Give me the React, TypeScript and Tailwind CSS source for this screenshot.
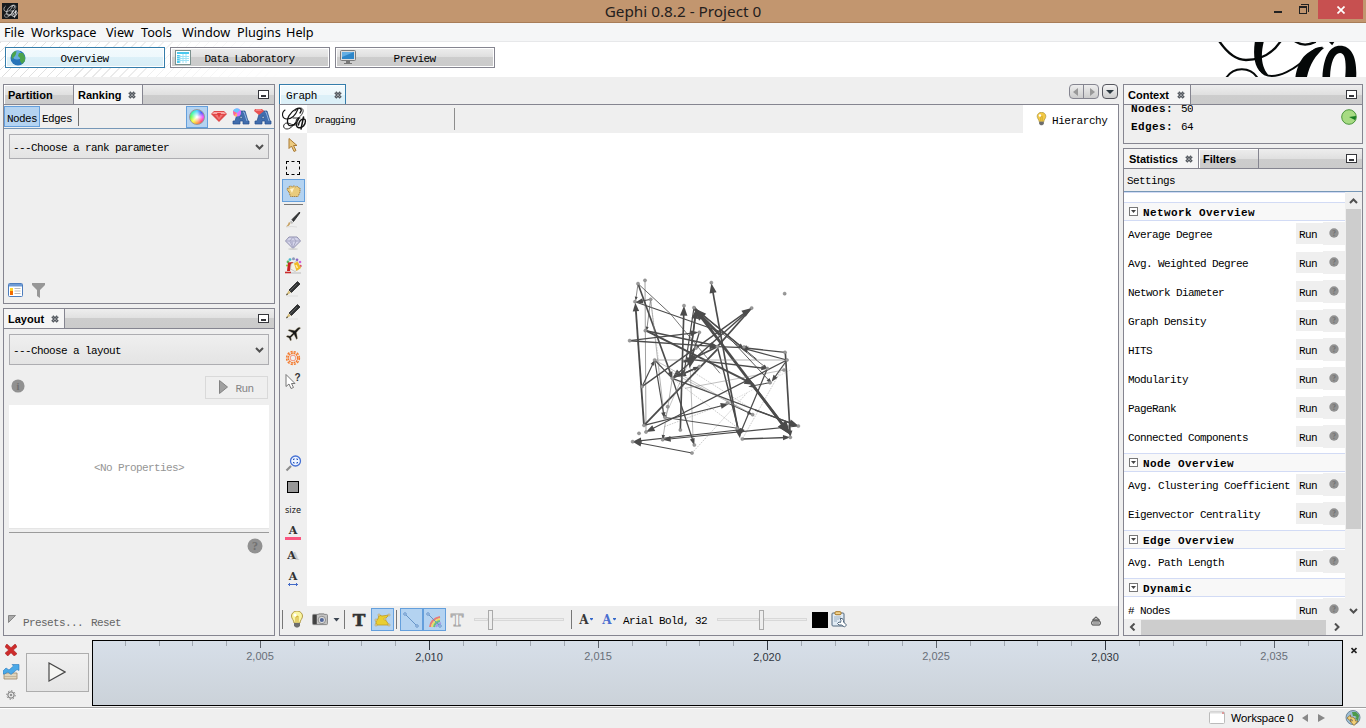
import React from 'react';

const mono = "font-['Liberation_Mono','Noto_Sans_CJK_SC',monospace] text-[11px] tracking-[-0.6px] leading-[12px] whitespace-pre text-black";
const monoBold = "font-['Liberation_Mono','Noto_Sans_CJK_SC',monospace] text-[11px] font-bold tracking-[0.4px] leading-[12px] whitespace-pre text-black";
const tabText = "font-['Liberation_Sans',Arial,sans-serif] text-[11px] font-bold leading-[14px] whitespace-pre text-black";
const ui = "font-['Noto_Sans','Open_Sans',sans-serif] whitespace-pre";
const stripBg = 'bg-[linear-gradient(to_bottom,#eeeeee,#e0e0e0_50%,#cdcdcd_50%,#cbcbcb)]';

function Close() {
  return (
    <svg width="8" height="8" viewBox="0 0 8 8" className="shrink-0">
      <path d="M1.300 1.300l5.400 5.400M6.700 1.300L1.300 6.700" stroke="#555a60" strokeWidth="3" />
      <path d="M1.500 1.500l5 5M6.500 1.500l-5 5" stroke="#d4d6d8" strokeWidth=".8" strokeDasharray="1 .8" />
    </svg>
  );
}

function Minimise() {
  return (
    <div className="mr-[5px] ml-auto flex h-[9px] w-[11px] items-end justify-center self-center border border-[#35363b] bg-white pb-px">
      <div className="h-[2px] w-[5px] bg-[#35363b]" />
    </div>
  );
}

function ScriptLogo({ size, color }: { size: number; color: string }) {
  return (
    <svg width={size} height={size} viewBox="0 0 26 26" fill="none" stroke={color} strokeLinecap="round">
      <path d="M4 4c-4 3-3 9 2 9 5 0 9-5 11-10" strokeWidth="1.1" />
      <path d="M19 7c3-4 0-6-4-4C9 6 5 13 7 18c2 4 8 1 11-6" strokeWidth="1.3" />
      <path d="M12 12h7M17 12c-3 6-7 11-11 11-5 0-4-6 0-6 3 0 6 3 9 2" strokeWidth=".9" />
      <path d="M22.500 11l-2.500 12" strokeWidth="1.5" />
      <path d="M16 17c-2 5 3 6 6.500 3 3-4 2-7 .5-7-3 0-5 3-5.500 6" strokeWidth="1.4" />
      <path d="M14 5c5-5 9-3 8 1-1 3-4 6-7 8" strokeWidth=".8" />
    </svg>
  );
}

function BigLogo() {
  return (
    <svg width="148" height="35" viewBox="654 126 444 105" className="ml-auto" fill="none" stroke="#050808">
      <path d="M658 124C684 162 708 180 738 180c48 0 82-22 105-58" strokeWidth="7" />
      <path d="M778 122c-9 42-9 88 16 101 33 17 96-14 137-63 10-12 22-18 37-17" strokeWidth="6" />
      <path d="M765 122h27c-10 40-10 75 13 103-40-3-48-51-40-103z" fill="#050808" stroke="none" />
      <path d="M676 238c22-40 76-40 98-2" strokeWidth="6" />
      <path d="M885 124q28 19 62 1M990 124l6 6 4-6" strokeWidth="7" />
      <path d="M885 240c6-49 27-96 88-97-28 24-46 53-54 97z" fill="#050808" stroke="none" />
      <path fillRule="evenodd" d="M967 240c2-70 22-103 53-103 38 0 53 42 48 103zm23 0h45c5-55 1-81-15-81-18 0-30 32-30 81z" fill="#050808" stroke="none" />
    </svg>
  );
}

function Globe() {
  return (
    <svg width="16" height="16" viewBox="0 0 16 16">
      <circle cx="8" cy="8" r="7.5" fill="#2774b9" />
      <circle cx="7" cy="5" r="4.6" fill="#66acdd" />
      <path d="M1.5 5q2-4 5-4L6 4 5 6 3 8 2 10zM9 3l4 0 2 4 0 4-3 3-2-3 0-3-2-2z" fill="#4ba34c" />
    </svg>
  );
}

function Perspective({ label, active, icon }: { label: string; active?: boolean; icon: React.ReactNode }) {
  return (
    <div className={`mr-[5px] flex h-[21px] w-[160px] items-center border p-px ${active ? 'border-[#347dab] bg-[linear-gradient(to_bottom,#f2fafd,#eef8fc_50%,#dcf0f8_50%,#d8edf5)]' : 'border-[#858590] bg-[linear-gradient(to_bottom,#eeeeee,#dedede_50%,#cdcdcd_50%,#cbcbcb)]'} shadow-[inset_0_0_0_1px_#ffffff]`}>
      <div className="ml-[3px] flex w-4 shrink-0 items-center justify-center">{icon}</div>
      <div className={`flex-1 pt-[2px] pr-[20px] text-center ${mono}`}>{label}</div>
    </div>
  );
}

function ColorWheel() {
  return <div className="size-4 rounded-full border border-[#999] bg-[radial-gradient(circle,white_5%,transparent_65%),conic-gradient(#4ad4ff,#4b57ff,#f64dff,#ff466d,#ff9c37,#f8ff3f,#5fff4b,#35f5b9,#4ad4ff)]" />;
}

function Ruby() {
  return (
    <svg width="16" height="11" viewBox="0 0 16 11">
      <path d="M3 0h10l3 3-8 8-8-8z" fill="#df4a4a" />
      <path d="M3 1h10l2 2H1z" fill="#f9a5a5" />
      <path d="M4 4h8l-4 5z" fill="#f07575" />
      <path d="M6 2h4l-2 5z" fill="#e23a3a" />
    </svg>
  );
}

function BlueA({ ruby }: { ruby?: boolean }) {
  return (
    <svg width="18" height="18" viewBox="0 0 18 18">
      <path fillRule="evenodd" d="M6 3h7l3 10h1v3h-6v-3H8v3H1v-3h2zM9 7l-1.2 3.5h2.6z" fill="#416eae" stroke="#244f8c" strokeWidth=".7" />
      <path d="M11 4h1l3 9" fill="none" stroke="#8cb1df" />
      {ruby ? <path d="M1 1h7l2 2-5 4-5-4z" fill="#e95252" /> : <g><circle cx="5" cy="4.5" r="4" fill="#df75ff" /><path d="M5 5L1 3A4 4 0 0 1 8 2z" fill="#69c8ff" /><path d="M5 5L1 3l1 5z" fill="#ff6988" /><path d="M5 5l-3 3 3 .5z" fill="#ffba5c" /></g>}
      {ruby && <path d="M2 1.5h5l1 1H1.500z" fill="#fab0b0" />}
    </svg>
  );
}

function Chevron({ dir = 'down' }: { dir?: 'down' | 'up' | 'left' | 'right' }) {
  const paths = { down: 'M1 2l3.500 3.500L8 2', up: 'M1 6l3.500-3.500L8 6', left: 'M6.500 .5L3 4l3.500 3.500', right: 'M3 .5L6.500 4 3 7.500' };
  return <svg width="9" height="8" viewBox="0 0 9 8" className="shrink-0"><path d={paths[dir]} fill="none" stroke="#505050" strokeWidth="2" /></svg>;
}

function Select({ label, tall }: { label: string; tall?: boolean }) {
  return (
    <div className={`mx-[5px] flex items-center justify-between border border-[#adadb1] bg-[linear-gradient(#efefef,#e4e4e4)] pr-[4px] pl-[3px] ${tall ? 'h-[31px]' : 'h-[25px]'}`}>
      <span className={`pt-[2px] ${mono}`}>{label}</span>
      <Chevron />
    </div>
  );
}

function Help({ size, label = '?' }: { size: number; label?: string }) {
  return (
    <svg width={size} height={size} viewBox="0 0 16 16">
      <circle cx="8" cy="8" r="7.500" fill="#919191" />
      <text x="8" y="12.2" textAnchor="middle" fontFamily="Liberation Serif, serif" fontWeight="bold" fontSize="12" fill="#707070">{label}</text>
    </svg>
  );
}

function RankingPanel() {
  return (
    <div className="flex h-[220px] flex-col border border-[#858590]">
      <div className={`flex h-[20px] border-b border-[#858590] ${stripBg}`}>
        <div className="flex w-[70px] items-center border-r border-[#858590] pl-1 shadow-[inset_1px_1px_0_#fff]"><span className={tabText}>Partition</span></div>
        <div className="flex w-[69px] items-center border-r border-[#858590] bg-[#f5f5f5] pl-1"><span className={tabText}>Ranking</span><div className="ml-[7px]"><Close /></div></div>
        <Minimise />
      </div>
      <div className="flex h-[24px] items-center border-b border-[#7697b7]">
        <div className="flex h-[21px] w-[36px] items-center justify-center border border-[#649fdc] bg-[#b4d3f1] pt-[4px]"><span className={mono}>Nodes</span></div>
        <span className={`ml-[2px] pt-[4px] ${mono}`}>Edges</span>
        <div className="ml-[6px] h-[18px] w-px bg-[#707070]" />
        <div className="ml-auto flex h-[22px] w-[22px] items-center justify-center border border-[#649fdc] bg-[#b4d3f1]"><ColorWheel /></div>
        <div className="flex w-[22px] justify-center"><Ruby /></div>
        <div className="flex w-[22px] justify-center"><BlueA /></div>
        <div className="flex w-[22px] justify-center"><BlueA ruby /></div>
      </div>
      <div className="h-[5px]" />
      <Select label="---Choose a rank parameter" />
      <div className="mt-auto flex h-[26px] items-center pl-1">
        <svg width="15" height="14" viewBox="0 0 15 14"><rect x=".5" y=".5" width="14" height="13" rx="1" fill="#fff" stroke="#4d7dbd" /><path d="M1 1h13v2.500H1z" fill="#6e9bd5" /><path d="M2 5h3v7H2z" fill="#f26b00" /><path d="M2 5h3v3H2z" fill="#ffd32c" /><path d="M6.500 5.500h6M6.500 8h6M6.500 10.500h6" stroke="#bbb" /></svg>
        <svg className="ml-[9px]" width="13" height="15" viewBox="0 0 13 15"><path d="M0 0h13v2L8 7v8L5 13V7L0 2z" fill="#979797" /></svg>
      </div>
    </div>
  );
}

function LayoutPanel() {
  return (
    <div className="mt-[4px] flex h-[328px] flex-col border border-[#858590]">
      <div className={`flex h-[20px] border-b border-[#858590] ${stripBg}`}>
        <div className="flex w-[61px] items-center border-r border-[#858590] bg-[#f5f5f5] pl-1"><span className={tabText}>Layout</span><div className="ml-[7px]"><Close /></div></div>
        <Minimise />
      </div>
      <div className="h-[5px]" />
      <Select label="---Choose a layout" tall />
      <div className="mt-[9px] flex h-[26px] items-center pr-[6px] pl-[7px]">
        <div className="mb-[3px]"><Help size={14} label="i" /></div>
        <div className="ml-auto flex h-[23px] w-[63px] items-center justify-center gap-[7px] border border-[#d9d9d9]">
          <svg width="9" height="14" viewBox="0 0 9 14"><path d="M.5.5v13L8.500 7z" fill="#a0a0a0" stroke="#828282" /></svg>
          <span className={`pt-[3px] ${mono}`}><span className="text-[#858585]">Run</span></span>
        </div>
      </div>
      <div className="mx-[5px] mt-[5px] flex h-[124px] items-center justify-center border-b border-[#e5e5e5] bg-white"><span className={`pt-[2px] ${mono}`}><span className="text-[#959595]">&lt;No Properties&gt;</span></span></div>
      <div className="mx-[5px] mt-[3px] h-px bg-[#9b9b9b]" />
      <div className="mt-[5px] mr-[11px] self-end"><Help size={16} /></div>
      <div className="mt-auto mb-[4px] flex items-center pl-1">
        <svg width="9" height="8" viewBox="0 0 9 8" className="mb-2"><path d="M.5.5h7L.5 7.500z" fill="#aaa" stroke="#888" /></svg>
        <span className={`ml-[6px] ${mono}`}><span className="text-[#656565]">Presets...</span></span><span className={`ml-[8px] ${mono}`}><span className="text-[#656565]">Reset</span></span>
      </div>
    </div>
  );
}

function Bulb({ small }: { small?: boolean }) {
  return (
    <svg width={small ? 11 : 14} height={small ? 14 : 17} viewBox="0 0 14 17">
      <path d="M4 12C4 9 1.500 8 1.500 5a5.500 5 0 0 1 11 0c0 3-2.500 4-2.500 7z" fill={small ? '#f4ca45' : '#faf6a2'} stroke="#b39b47" />
      <path d="M6 11V6l2-1v6" stroke="#d0a92e" fill="none" />
      <path d="M4 12h6v3L8 16.500H6L4 15z" fill="#6d6d6d" />
      <circle cx="5" cy="4" r="1.500" fill="#fff" />
    </svg>
  );
}

function Brush() {
  return <svg width="16" height="17" viewBox="0 0 16 17"><path d="M1 16q6-1 11 0" stroke="#ddd" fill="none" /><path d="M14.500 1L7 8.500l1.500 2L14.800 2z" fill="#35383b" stroke="#202020" strokeWidth=".8" /><path d="M5.500 10.200l2 2" stroke="#bbb" strokeWidth="2" /><path d="M5.500 12q-1 3.500-4.500 3.500 2-1.500 3-4.500z" fill="#c7a264" /></svg>;
}
function Diamond() {
  return <svg width="16" height="14" viewBox="0 0 16 14"><path d="M4 1h8l3.500 4L8 12.500.5 5z" fill="#d4d4ea" stroke="#8f8fae" /><path d="M1 5h14M5 5l3 7 3-7-3-4z" fill="none" stroke="#a7a7c3" /><path d="M5 5h3v6z" fill="#b8b8d4" /><ellipse cx="8" cy="13" rx="5" ry=".7" fill="#ccc" /></svg>;
}
function Palette() {
  return (
    <svg width="17" height="17" viewBox="0 0 17 17">
      <circle cx="3" cy="5" r="1.400" fill="#59b95f" /><circle cx="5" cy="2.600" r="1.400" fill="#48b7ca" /><circle cx="8.500" cy="1.700" r="1.500" fill="#8b98b8" /><circle cx="12" cy="2.800" r="1.400" fill="#8868c5" /><circle cx="15" cy="5" r="1.300" fill="#cb63db" /><circle cx="15.500" cy="9" r="1.200" fill="#df4c61" /><circle cx="2" cy="8.500" r="1.100" fill="#96d63d" />
      <path d="M3 5.500l5.500-.5L6 8l-1 6H2z" fill="#c92222" />
      <path d="M6 7l6-3 3.500 6.500L10 14.500 5.500 12z" fill="#f4f1e4" stroke="#b5b5b5" strokeWidth=".7" /><path d="M9 6.500l3.500-2L16 11l-4.500 3z" fill="#f1b926" /><path d="M11 8l1.500 3" stroke="#fff0a8" strokeWidth="1.500" />
      <path d="M0 15.500h6" stroke="#c82a2a" strokeWidth="1.600" /><path d="M6 16h10" stroke="#bbb" />
    </svg>
  );
}
function Pencil() {
  return <svg width="16" height="17" viewBox="0 0 16 17"><path d="M2 16h11" stroke="#ddd" /><path d="M12.500 1.500L15 4 6.500 12.500 4 10z" fill="#303234" stroke="#222" strokeWidth=".8" /><path d="M12 4L5 11" stroke="#666" strokeWidth=".8" /><path d="M3.500 10.500l2.300 2.300L1 15.500z" fill="#d7be78" /><path d="M1 15.500l1-2.200 1 1z" fill="#222" /></svg>;
}
function Plane() {
  return <svg width="17" height="17" viewBox="0 0 17 17"><path d="M15.500 2q-1-1.500-3 0L10 4.500 4 3.500 3 4.500l5 2.500-3 3-2.500-.5L1 10.500l3 1.500 1.500 3 1-1-.5-2.500 3-3 2.500 5 1-1L11.500 6.500l2.500-3q1.500-1 1.500-1.500z" fill="#171717" stroke="#c5b68f" strokeWidth=".4" /></svg>;
}
function Cursor({ help }: { help?: boolean }) {
  return <svg width="16" height="18" viewBox="0 0 16 18"><path d={help ? 'M1 2.500v12l3-2.500 2 4.500 2.500-1-2-4h3.500z' : 'M4 2.500v10l2.500-2.500 2.500 5.500 2-1-2.500-5h3.500z'} fill={help ? '#fff' : '#edcb80'} stroke={help ? '#777' : '#aa7a35'} />{help && <text x="9.500" y="9" fontFamily="Liberation Sans" fontSize="10" fontWeight="bold" fill="#333">?</text>}</svg>;
}
function Burst() {
  return <svg width="16" height="16" viewBox="0 0 16 16" fill="none" stroke="#f47a2d"><circle cx="8" cy="8" r="2.800" strokeWidth="1" stroke="#f4947b" /><circle cx="8" cy="8" r="4.800" strokeWidth="1.700" strokeDasharray="1.800 .7" /><circle cx="8" cy="8" r="6.500" strokeWidth="1.300" strokeDasharray="2.200 1.200" /></svg>;
}
function Hand() {
  return <svg width="15" height="14" viewBox="0 0 15 14"><path d="M3 8L1 6l.5-2L3 4.500V2.500L5 2l1.500 1L8 1.500 9.500 3 11 2l1.500 1.500L14 4v4l-2 4.500H4.500z" fill="#e9cb7c" stroke="#a47c38" strokeWidth=".9" strokeDasharray="1.400 .6" /><path d="M4 5l4-1-2 5z" fill="#fff3cd" /></svg>;
}
function Magnifier() {
  return <svg width="17" height="17" viewBox="0 0 17 17"><path d="M1.500 15.500L6 11" stroke="#8c8c8c" strokeWidth="2.200" /><circle cx="10.500" cy="6" r="5" fill="#eef5ff" stroke="#4772d4" strokeWidth="1.300" /><path d="M8.500 5V4H9.700M11.300 4h1.200v1M12.500 7v1h-1.200M9.700 8H8.500V7" stroke="#2553bd" fill="none" strokeWidth="1" /></svg>;
}

function Slot({ children, active }: { children?: React.ReactNode; active?: boolean }) {
  return <div className={`flex h-[23px] w-[23px] shrink-0 items-center justify-center pr-px ${active ? 'border border-[#649fdc] bg-[#b4d3f1]' : ''}`}>{children}</div>;
}

const serifA = "font-['DejaVu_Serif',serif] text-[11px] font-bold leading-[12px] text-[#333]";

function ToolColumn() {
  return (
    <div className="flex w-[27px] shrink-0 flex-col items-center bg-[#efefef]">
      <Slot><Cursor /></Slot>
      <Slot><div className="size-[14px] border border-dashed border-black" /></Slot>
      <Slot active><Hand /></Slot>
      <div className="mt-[1px] mb-[3px] h-px w-[19px] border-b border-[#777] pb-px" />
      <Slot><Brush /></Slot>
      <Slot><Diamond /></Slot>
      <Slot><Palette /></Slot>
      <Slot><Pencil /></Slot>
      <Slot><Pencil /></Slot>
      <Slot><Plane /></Slot>
      <Slot><Burst /></Slot>
      <Slot><Cursor help /></Slot>
      <div className="mt-auto mb-4 flex flex-col">
        <Slot><Magnifier /></Slot>
        <Slot><div className="size-3 border border-black bg-[#999]" /></Slot>
        <Slot><span className={`text-[9px] text-[#222] ${ui}`}>size</span></Slot>
        <Slot><div className="flex w-4 flex-col items-center"><span className={serifA}>A</span><div className="h-[3px] w-4 bg-[#fb557f]" /></div></Slot>
        <Slot><span className={`mr-[3px] [text-shadow:3px_1px_#ccc] ${serifA}`}>A</span></Slot>
        <Slot><div className="flex flex-col items-center"><span className={serifA}>A</span><svg width="10" height="3" viewBox="0 0 10 3"><path d="M0 1.500h10M1.500 0v3M8.500 0v3" stroke="#4169c7" /></svg></div></Slot>
      </div>
    </div>
  );
}

type Edge = [number, number, number, number, number, number];
// x1, y1, x2, y2, width, arrow size
const edges: Edge[] = [
  [84, 41, 187, 325, 5, 20], [84, 41, 77, 92, 2, 12], [84, 41, 180, 130, 2.5, 0], [180, 130, 330, 310, 2.2, 0], [122, 88, 77, 97, 3, 22],
  [75, 95, 345, 190, 3.2, 0], [122, 88, 110, 182, 2, 12], [122, 88, 163, 442, 1.8, 0], [102, 466, 76, 98, 5.5, 26],
  [59, 212, 325, 230, 4.5, 26], [108, 182, 322, 228, 4.5, 20], [59, 212, 265, 187, 4, 24], [108, 182, 435, 345, 6, 32],
  [252, 113, 541, 494, 8, 42], [330, 195, 250, 113, 8, 40], [425, 114, 187, 325, 4.5, 28], [96, 350, 425, 114, 4, 30],
  [102, 466, 322, 238, 5.5, 0], [322, 230, 425, 114, 5, 0], [385, 485, 304, 40, 5, 29], [322, 230, 390, 497, 4.5, 0],
  [211, 480, 222, 107, 5, 30], [252, 113, 222, 310, 3.5, 0], [240, 268, 258, 118, 5, 28], [258, 130, 236, 284, 3.5, 20],
  [134, 270, 163, 445, 3.5, 18], [96, 350, 134, 270, 3.5, 16], [187, 325, 253, 525, 4, 20], [134, 270, 187, 325, 3.5, 0],
  [134, 270, 531, 270, 1.8, 0], [134, 270, 428, 434, 1.4, 0], [187, 325, 565, 468, 3.5, 28], [190, 310, 428, 434, 1.5, 0],
  [225, 355, 522, 300, 1.5, 0], [531, 270, 108, 486, 3.8, 26], [102, 466, 356, 402, 3.6, 24], [531, 270, 388, 232, 3.8, 26], [525, 247, 388, 232, 4, 22],
  [526, 247, 541, 502, 5, 20], [531, 270, 485, 335, 3.5, 20], [252, 113, 402, 237, 4.5, 18], [330, 185, 472, 296, 2.5, 14],
  [345, 190, 485, 340, 2.8, 16], [322, 230, 400, 233, 4, 0], [240, 268, 472, 296, 4, 18], [252, 113, 440, 268, 3, 0],
  [472, 296, 388, 497, 3.6, 22], [385, 475, 390, 505, 5, 28], [397, 507, 541, 502, 4, 22],
  [565, 468, 158, 509, 3.5, 24], [385, 480, 68, 515, 3.5, 26], [246, 549, 68, 515, 3.5, 26], [163, 442, 385, 475, 2.8, 0],
  [480, 338, 415, 350, 3, 18], [352, 399, 428, 434, 3, 16], [268, 290, 200, 320, 5, 28], [187, 325, 268, 290, 4, 18],
  [240, 268, 163, 445, 1.4, 10], [187, 325, 158, 509, 1.8, 14], [240, 270, 322, 230, 5, 0], [220, 275, 260, 265, 7, 30], [268, 187, 240, 280, 4, 26], [252, 235, 238, 295, 5, 26],
  [428, 345, 541, 494, 7, 40], [435, 420, 565, 468, 4, 24],
];
const faintEdges: Edge[] = [
  [105, 31, 108, 486, 2.8, 0], [240, 280, 250, 525, 2, 0], [246, 549, 410, 370, 1.5, 0], [163, 470, 352, 399, 1.5, 0], [187, 325, 385, 475, 1.5, 0],
  [122, 88, 150, 300, 1, 0], [352, 399, 541, 300, 1, 0], [531, 270, 397, 507, 1.5, 0], [240, 300, 430, 420, 1.5, 0],
];
const nodes = [
  [84, 41], [105, 31], [75, 95], [122, 88], [106, 182], [59, 212], [134, 270], [96, 350], [102, 466], [108, 486], [87, 490], [68, 515], [158, 509], [246, 549], [253, 525], [211, 480],
  [222, 107], [252, 113], [304, 38], [425, 114], [524, 71], [525, 247], [531, 270], [522, 300], [565, 468], [541, 502], [397, 507], [428, 434], [352, 399], [165, 442], [382, 475],
  [187, 325], [268, 187], [480, 338], [268, 290], [322, 230], [402, 231], [472, 296], [258, 234], [173, 410],
];

function arrowHead([x1, y1, x2, y2, , s]: Edge) {
  const len = Math.hypot(x2 - x1, y2 - y1);
  const ux = (x2 - x1) / len;
  const uy = (y2 - y1) / len;
  const bx = x2 - ux * s;
  const by = y2 - uy * s;
  const h = s * 0.37;
  return `${x2},${y2} ${bx - uy * h},${by + ux * h} ${bx + uy * h},${by - ux * h}`;
}

function Network() {
  return (
    <svg width="200" height="190" viewBox="0 0 600 570" className="mt-[137px] ml-[303px]">
      {faintEdges.map(([a, b, c, d, w], i) => <line key={i} x1={a} y1={b} x2={c} y2={d} strokeWidth={w} stroke="#999" strokeDasharray={w < 2 ? '5 3' : undefined} />)}
      {edges.map((e, i) => (
        <g key={i}>
          <line x1={e[0]} y1={e[1]} x2={e[5] ? e[2] - ((e[2] - e[0]) * e[5] * 0.5) / Math.hypot(e[2] - e[0], e[3] - e[1]) : e[2]} y2={e[5] ? e[3] - ((e[3] - e[1]) * e[5] * 0.5) / Math.hypot(e[2] - e[0], e[3] - e[1]) : e[3]} strokeWidth={e[4]} stroke={e[4] < 1.9 ? '#808080' : '#4b4b4b'} />
          {e[5] > 0 && <polygon points={arrowHead(e)} fill="#4b4b4b" />}
        </g>
      ))}
      {nodes.map(([x, y], i) => <circle key={i} cx={x} cy={y} r="4.800" fill="#999" stroke="#777" strokeWidth="1.200" />)}
    </svg>
  );
}

function Slider({ pos }: { pos: 'low' | 'mid' }) {
  return (
    <div className="flex h-[21px] w-[90px] shrink-0 items-center">
      <div className={`h-[3px] border border-[#d8d8d8] bg-[#ececec] ${pos === 'low' ? 'w-[14px]' : 'w-[42px]'}`} />
      <div className="h-[20px] w-[5px] border border-[#aaa] bg-[#eee]" />
      <div className="h-[3px] flex-1 border border-[#d8d8d8] bg-[#ececec]" />
    </div>
  );
}

function Sep() {
  return <div className="h-[19px] w-px shrink-0 bg-[#777]" />;
}

function LetterT({ outline }: { outline?: boolean }) {
  return (
    <span className={`font-['DejaVu_Serif',serif] text-[17px] leading-[20px] font-bold ${outline ? 'text-[#f7f7f7] [-webkit-text-stroke:0.9px_#a5a5a5]' : 'text-[#333] [-webkit-text-stroke:0.6px_#333]'}`}>T</span>
  );
}

function SmallA({ blue }: { blue?: boolean }) {
  return (
    <div className="flex items-center gap-px">
      <span className={`font-['DejaVu_Serif',serif] text-[12px] leading-4 font-bold ${blue ? 'text-[#4a6ed0]' : 'text-[#383838]'}`}>A</span>
      <svg width="3" height="3" viewBox="0 0 3 3"><path d="M0 0h3v1L1.500 2.500 0 1z" fill="#3367c9" /></svg>
    </div>
  );
}

function BottomBar() {
  return (
    <div className="flex h-[29px] items-center bg-[#efefef] pb-[2px]">
      <div className="ml-[2px]"><Sep /></div>
      <div className="flex w-[26px] justify-center pl-[2px]"><Bulb /></div>
      <div className="flex w-[23px] justify-center pr-px">
        <svg width="16" height="13" viewBox="0 0 17 14"><rect x=".5" y="1.500" width="16" height="11" rx="1" fill="#c4c4c4" stroke="#818181" /><path d="M1 2h4v10H1z" fill="#414141" /><path d="M7 0h6v2H7z" fill="#aaa" /><circle cx="10.500" cy="7.500" r="4" fill="#ddd" stroke="#888" /><circle cx="10.500" cy="7.500" r="2.200" fill="#526799" /></svg>
      </div>
      <svg width="9" height="5" viewBox="0 0 9 5"><path d="M1.500 1h6L4.500 4.500z" fill="#3c4652" /></svg>
      <div className="ml-[3px]"><Sep /></div>
      <div className="flex w-[26px] justify-center pl-[2px]"><LetterT /></div>
      <Slot active><svg width="17" height="14" viewBox="0 0 17 14"><path d="M5 2l3 1 7-1-4 4 4 6H2V7l2-1z" fill="#e9ce31" stroke="#bf9c24" strokeWidth=".8" /><g fill="#fff" stroke="#ad8925" strokeWidth=".6"><circle cx="5" cy="2" r="1" /><circle cx="15" cy="2" r="1" /><circle cx="2" cy="7" r="1" /><circle cx="2" cy="12" r="1" /><circle cx="15" cy="12" r="1" /><circle cx="11" cy="6" r="1" /></g></svg></Slot>
      <div className="mr-[3px] ml-[2px]"><Sep /></div>
      <Slot active><svg width="16" height="16" viewBox="0 0 16 16"><path d="M2 2l12 12" stroke="#6795c7" /><g fill="#fff" stroke="#5287c5"><circle cx="2" cy="2" r="1.200" /><circle cx="14" cy="14" r="1.200" /></g></svg></Slot>
      <Slot active><svg width="16" height="16" viewBox="0 0 16 16" fill="none"><path d="M4 15Q5 7 14 5" stroke="#e77b7b" strokeWidth="2" /><path d="M6 15q1-6 8-8" stroke="#eedb68" strokeWidth="2" /><path d="M8 15q1-5 6-6" stroke="#68bd85" strokeWidth="2" /><path d="M10 15q1-3 5-4" stroke="#a59ee6" strokeWidth="2" /><path d="M2 2l12 12" stroke="#6795c7" /><circle cx="2" cy="2" r="1.200" fill="#fff" stroke="#5287c5" /><circle cx="14" cy="14" r="1.200" fill="#fff" stroke="#5287c5" /></svg></Slot>
      <Slot><LetterT outline /></Slot>
      <div className="ml-[5px]"><Slider pos="low" /></div>
      <div className="ml-[7px]"><Sep /></div>
      <div className="flex w-[26px] justify-center pl-[2px]"><SmallA /></div>
      <div className="flex w-[22px] justify-center"><SmallA blue /></div>
      <span className={`ml-[3px] w-[94px] pt-[2px] ${mono}`}>Arial Bold, 32</span>
      <Slider pos="mid" />
      <div className="ml-[5px] size-4 bg-black" />
      <svg className="ml-[3px]" width="17" height="17" viewBox="0 0 17 17"><rect x="1" y="2" width="12" height="13" rx="1" fill="#e1ebf4" stroke="#53697e" /><rect x="4" y=".7" width="6" height="3" rx="1" fill="#efd28f" stroke="#a97721" /><path d="M3 6h7M3 8h5M3 10h3" stroke="#9eb1c3" /><path d="M9 7.500q3-1 3.500 2v1.500l3 3-2 2-3-2H8l-1.500-1.500L8 11l1.500.5.500-2z" fill="#fff" stroke="#53697e" /></svg>
      <svg className="mt-[3px] mr-[17px] ml-auto" width="10" height="10" viewBox="0 0 10 10"><path d="M5 .8L8.500 4H1.500z" fill="#bbb" stroke="#444" /><rect x=".8" y="5" width="8.400" height="4" rx="1" fill="none" stroke="#333" /><path d="M2 7h6" stroke="#333" strokeWidth=".8" /></svg>
    </div>
  );
}

function GraphPanel() {
  return (
    <div className="ml-[4px] flex w-[840px] flex-col">
      <div className="flex h-[20px]">
        <div className="flex w-[67px] items-center justify-between border border-b-0 border-[#347dab] bg-[linear-gradient(to_bottom,#f2fafd,#eef8fc_50%,#dcf0f8_50%,#dcf0f8)] pr-[3px] pl-[6px] shadow-[inset_1px_1px_0_#fff]"><span className={`pt-[2px] tracking-[-0.4px]! ${mono}`}>Graph</span><Close /></div>
        <div className="ml-auto flex h-[15px] items-stretch">
          <div className="flex w-[30px] items-center justify-around rounded-sm border border-[#858590] bg-[linear-gradient(#eee,#ccc)]">
            <svg width="5" height="8" viewBox="0 0 5 8"><path d="M5 0v8L0 4z" fill="#999" /></svg><div className="h-full w-px bg-[#858590]" /><svg width="5" height="8" viewBox="0 0 5 8"><path d="M0 0v8l5-4z" fill="#999" /></svg>
          </div>
          <div className="mr-px ml-[3px] flex w-4 items-center justify-center rounded-sm border border-[#55565e] bg-[linear-gradient(#f5f5f5,#ccc)]"><svg width="8" height="4" viewBox="0 0 8 4"><path d="M0 0h8L4 4z" fill="#2d3940" /></svg></div>
        </div>
      </div>
      <div className="flex flex-1 flex-col border border-[#858590] bg-white">
        <div className="flex h-[28px] items-center bg-[#efefef]">
          <div className="flex h-full w-[27px] items-center justify-center bg-white"><ScriptLogo size={26} color="#111" /></div>
          <span className="ml-2 w-[139px] pt-[3px] font-['Liberation_Mono',monospace] text-[9.5px] leading-3 tracking-[-0.7px] text-black">Dragging</span>
          <div className="h-[22px] w-px bg-[#8d8d8d]" />
          <div className="ml-auto flex h-full w-[95px] items-center bg-white pl-[13px]"><Bulb small /><span className={`ml-[5px] pt-[3px] tracking-[-0.45px]! ${mono}`}>Hierarchy</span></div>
        </div>
        <div className="flex h-[473px]"><ToolColumn /><Network /></div>
        <BottomBar />
      </div>
    </div>
  );
}

function GroupHeader({ title }: { title: string }) {
  return (
    <div className="flex h-[19px] shrink-0 items-center border-y border-[#d2dbf5] bg-[#f8f8f8] pl-[5px]">
      <div className="flex size-[9px] items-center justify-center border border-[#777] bg-white"><svg width="5" height="3" viewBox="0 0 5 3"><path d="M0 0h5L2.500 3z" fill="#444" /></svg></div>
      <span className={`ml-[5px] pt-[2px] ${monoBold}`}>{title}</span>
    </div>
  );
}

function StatRow({ label }: { label: string }) {
  return (
    <div className="flex h-[29px] shrink-0 items-start pl-[4px]">
      <span className={`pt-[8px] ${mono}`}>{label}</span>
      <div className="mt-[2px] ml-auto flex h-[21px] w-[27px] items-center bg-[#efefef] pt-[2px] pl-[3px]"><span className={mono}>Run</span></div>
      <div className="mt-px flex h-[23px] w-[22px] items-start bg-[#efefef] pt-[6px] pl-[6px]"><Help size={10} /></div>
    </div>
  );
}

const groups = [
  { title: 'Network Overview', rows: ['Average Degree', 'Avg. Weighted Degree', 'Network Diameter', 'Graph Density', 'HITS', 'Modularity', 'PageRank', 'Connected Components'] },
  { title: 'Node Overview', rows: ['Avg. Clustering Coefficient', 'Eigenvector Centrality'] },
  { title: 'Edge Overview', rows: ['Avg. Path Length'] },
  { title: 'Dynamic', rows: ['# Nodes'] },
];

function RightColumn() {
  return (
    <div className="ml-[4px] flex w-[240px] flex-col">
      <div className="flex h-[60px] flex-col border border-[#858590]">
        <div className={`flex h-[20px] shrink-0 border-b border-[#858590] ${stripBg}`}>
          <div className="flex w-[67px] items-center border-r border-[#858590] bg-[#f5f5f5] pl-1"><span className={tabText}>Context</span><div className="ml-[8px]"><Close /></div></div>
          <Minimise />
        </div>
        <div className="flex flex-1 justify-between pr-[5px] pl-[7px]">
          <div>
            <div className="flex h-[7px] items-end overflow-hidden"><span className={`mb-[-3px] w-[50px] ${monoBold}`}>Nodes:</span><span className={`mb-[-3px] ${mono}`}>50</span></div>
            <div className="mt-[9px] flex"><span className={`w-[50px] ${monoBold}`}>Edges:</span><span className={mono}>64</span></div>
          </div>
          <svg className="mt-[4px]" width="16" height="16" viewBox="0 0 16 16"><circle cx="8" cy="8" r="7.300" fill="#a7db83" stroke="#4b963d" /><path d="M8 8l7-1q0 3-1 4z" fill="#167a21" /></svg>
        </div>
      </div>
      <div className="mt-[4px] flex h-[488px] flex-col border border-[#858590]">
        <div className={`flex h-[20px] shrink-0 border-b border-[#858590] ${stripBg}`}>
          <div className="flex w-[75px] items-center border-r border-[#858590] bg-[#f5f5f5] pl-[5px]"><span className={tabText}>Statistics</span><div className="ml-[7px]"><Close /></div></div>
          <div className="flex w-[60px] items-center border-r border-[#858590] pl-1 shadow-[inset_1px_1px_0_#fff]"><span className={tabText}>Filters</span></div>
          <Minimise />
        </div>
        <div className="flex h-[23px] shrink-0 items-center border-b border-[#7697b7] pt-[2px] pl-[3px]"><span className={mono}>Settings</span></div>
        <div className="flex h-[427px] shrink-0">
          <div className="flex w-[221px] flex-col overflow-hidden border-t border-[#d2dbf5] bg-white">
            <div className="h-[9px] shrink-0" />
            {groups.map((g) => <div key={g.title} className="flex shrink-0 flex-col"><GroupHeader title={g.title} />{g.rows.map((r) => <StatRow key={r} label={r} />)}</div>)}
          </div>
          <div className="ml-px flex w-4 flex-col items-start bg-[#efefef]">
            <div className="ml-[3px] flex h-[17px] items-center"><Chevron dir="up" /></div>
            <div className="h-[320px] w-[15px] bg-[#cdcdcd]" />
            <div className="mt-auto ml-[3px] flex h-[17px] items-center"><Chevron /></div>
          </div>
        </div>
        <div className="flex h-4 items-center">
          <div className="flex w-[17px] justify-center pr-px"><Chevron dir="left" /></div>
          <div className="h-[15px] w-[185px] bg-[#cdcdcd]" />
          <div className="ml-[6px]"><Chevron dir="right" /></div>
        </div>
      </div>
    </div>
  );
}

const years = [2005, 2010, 2015, 2020, 2025, 2030, 2035];
const ticks = Array.from({ length: 36 }, (_, i) => i);

function Timeline() {
  return (
    <div className="flex h-[72px] pt-[4px]">
      <div className="flex w-[22px] flex-col items-center">
        <svg className="mt-[4px]" width="12" height="12" viewBox="0 0 13 13"><path d="M2 0l4.500 4L11 0l2 3-4 3.500 4 4-3 2.500-3.500-3.500L3 13l-3-3 4-3.500L0 3z" fill="#ce2c2c" stroke="#a31919" strokeWidth=".6" /></svg>
        <svg className="mt-[8px]" width="17" height="16" viewBox="0 0 17 16"><path d="M1 9h13v6H1z" fill="#e0d5bd" stroke="#99866b" strokeWidth=".8" /><path d="M1 12.500h13" stroke="#b6a88e" strokeWidth=".7" /><path d="M0 10V7l3-3 3 2 4.500-4L9 .5h7v6l-2-1-6 5-3-2.500L1.500 10z" fill="#4aa9e8" stroke="#2879bc" strokeWidth=".6" /></svg>
        <svg className="mt-[10px]" width="10" height="10" viewBox="0 0 10 10"><circle cx="5" cy="5" r="3.200" fill="#e1e1e1" stroke="#777" /><circle cx="5" cy="5" r="4.300" fill="none" stroke="#888" strokeDasharray="1.500 1.800" /><circle cx="5" cy="5" r="1" fill="#777" /></svg>
      </div>
      <div className="mt-[13px] ml-[4px] flex h-[39px] w-[63px] items-center justify-center border border-[#adadad] bg-[linear-gradient(#f0f0f0,#e5e5e5)] pr-px pb-px"><svg width="18" height="20" viewBox="0 0 18 20"><path d="M1 1v18L17 10z" fill="#f6f6f3" stroke="#484848" strokeWidth="1.200" /></svg></div>
      <svg className="ml-[3px]" width="1251" height="66" viewBox="0 0 1251 66">
        <defs><linearGradient id="sky" x2="0" y2="1"><stop stopColor="#d7dfe9" /><stop offset="1" stopColor="#cbd2d9" /></linearGradient></defs>
        <rect x=".5" y=".5" width="1250" height="65" fill="url(#sky)" stroke="#000" />
        {ticks.map((i) => {
          const x = Math.floor(33.2 + i * 33.8) + 0.5;
          const major = i % 5 === 4;
          return <path key={i} d={`M${x} 1v${major ? (i % 10 === 9 ? 9 : 7) : 5}`} stroke={major ? (i % 10 === 9 ? '#303641' : '#5d636c') : '#a1a8b2'} />;
        })}
        {years.map((y, i) => <text key={y} x={168 + i * 169} y={i % 2 ? 21 : 19.6} textAnchor="middle" fontFamily="Liberation Sans, Arial, sans-serif" fontSize="11" fill={i % 2 ? '#303641' : '#686e78'}>{`2,${String(y).slice(1)}`}</text>)}
      </svg>
      <svg className="mt-[7px] ml-[8px]" width="6" height="7" viewBox="0 0 6 7"><path d="M.5 1l5 5M5.500 1l-5 5" stroke="#222" strokeWidth="1.600" /></svg>
    </div>
  );
}

const menus: [string, string][] = [['File', 'w-[27px]'], ['Workspace', 'w-[75px]'], ['View', 'w-[35px]'], ['Tools', 'w-[41px]'], ['Window', 'w-[55px]'], ['Plugins', 'w-[49px]'], ['Help', 'w-[40px]']];

export default function App() {
  return (
    <div className="flex h-[728px] w-[1366px] flex-col overflow-hidden bg-[#efefef]">
      <div className="flex h-[23px] shrink-0 items-start border-b border-[#a87d58] bg-[#c2966f]">
        <div className="mt-[3px] ml-[2px] flex size-4 items-center justify-center bg-[#171b1d]"><ScriptLogo size={15} color="#f4f4f4" /></div>
        <div className={`flex-1 pl-[82px] text-center text-[15.3px] leading-[22px] text-[#24201d] ${ui}`}>Gephi 0.8.2 - Project 0</div>
        <svg className="mr-[8px]" width="44" height="20" viewBox="0 0 44 20" shapeRendering="crispEdges"><path d="M8 11h8v2H8z" fill="#222" /><path d="M35 4.500h7.500V12" fill="none" stroke="#222" /><path d="M33.500 7.500h7v6h-7z" fill="none" stroke="#222" /><path d="M33 6h8v2h-8z" fill="#222" /></svg>
        <div className="mr-[3px] flex h-[19px] w-[45px] items-center justify-center bg-[#c75050]"><svg width="8" height="8" viewBox="0 0 8 8"><path d="M.5.5l7 7M7.500.5l-7 7" stroke="#fff" strokeWidth="1.700" /></svg></div>
      </div>
      <div className="flex h-[19px] shrink-0 items-center border-b border-[#e7e8ea] bg-[#f5f6f7] pl-[4px]">
        {menus.map(([m, w]) => <span key={m} className={`text-[12.7px] leading-[18px] text-black ${w} ${ui}`}>{m}</span>)}
      </div>
      <div className="flex h-[35px] shrink-0 items-start bg-white bg-[linear-gradient(to_right,transparent,white_280px),repeating-linear-gradient(135deg,#dddddd_0px,#dddddd_1px,transparent_1px,transparent_6.4px)]">
        <div className="mt-[5px] ml-[5px] flex">
          <Perspective label="Overview" active icon={<Globe />} />
          <Perspective label="Data Laboratory" icon={<svg width="16" height="15" viewBox="0 0 16 15"><rect x=".5" y=".5" width="15" height="14" fill="#fff" stroke="#7c918e" /><path d="M2 2h12v2H2zM2 5h3v8H2z" fill="#4bc9ef" /><path d="M5 5v8M8 4v9M11 4v9M2 6.500h12M2 8.500h12M2 10.500h12" stroke="#9de1f5" /></svg>} />
          <Perspective label="Preview" icon={<svg width="16" height="15" viewBox="0 0 16 15"><rect x=".5" y=".5" width="15" height="10" rx="1" fill="#ddd" stroke="#7b7b7b" /><path d="M2 2h12v7H2z" fill="#2d86c9" /><path d="M2 2h12L2 7z" fill="#63aee4" /><path d="M6 11h4v2h2v1H4v-1h2z" fill="#777" /></svg>} />
        </div>
        <BigLogo />
      </div>
      <div className="mt-[7px] flex h-[552px] shrink-0 pl-[3px]">
        <div className="flex w-[272px] flex-col"><RankingPanel /><LayoutPanel /></div>
        <GraphPanel />
        <RightColumn />
      </div>
      <Timeline />
      <div className="mt-[-1px] flex h-[21px] shrink-0 items-center border-t border-[#a0a0a0] shadow-[inset_0_1px_0_#fff]">
        <svg className="ml-[1209px]" width="16" height="14" viewBox="0 0 16 14"><rect x=".5" y="1" width="15" height="11.500" rx="1" fill="#fff" stroke="#bbb" /><path d="M1 2h14" stroke="#ddd" /><path d="M13 1h2v2h-2z" fill="#d99" /></svg>
        <span className={`ml-[6px] w-[71px] text-[11px] tracking-[-0.35px] text-black ${ui}`}>Workspace 0</span>
        <svg width="6" height="8" viewBox="0 0 6 8"><path d="M6 0v8L0 4z" fill="#888" /></svg>
        <svg className="ml-[10px]" width="7" height="8" viewBox="0 0 7 8"><path d="M0 0v8l7-4z" fill="#888" /></svg>
        <svg className="ml-[20px]" width="16" height="16" viewBox="0 0 16 16"><circle cx="8" cy="7.500" r="7" fill="#9dbdd4" stroke="#6e8798" /><path d="M7 2h4l3 3-1 3-3-2-2 0zM10 8l4-2-1 5z" fill="#4c9a4b" /><path d="M2 8l3.500-3v2q5 0 5 4H13l-4 4.500L5 11h2.500q0-2-2-2v2z" fill="#f0cf77" stroke="#8a6528" strokeWidth=".7" /></svg>
      </div>
    </div>
  );
}
